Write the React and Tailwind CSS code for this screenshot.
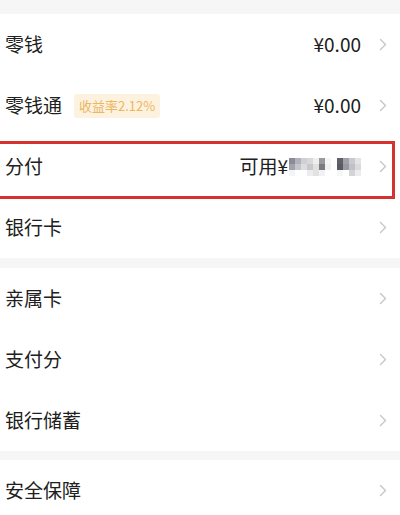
import React from 'react';

const mosaic = [
  ['bg-[#8a8a98]', 'bg-[#b2b2bc]', 'bg-[#d0d0d4]', 'bg-[#d8d8dc]', 'bg-[#eeeeee]', 'bg-[#9a9a9a]', 'bg-[#f5f5f5]', 'bg-[#ffffff]', 'bg-[#606068]', 'bg-[#a2a2aa]', 'bg-[#cacace]', 'bg-[#e4e4e4]'],
  ['bg-[#a2a2ae]', 'bg-[#c4c4cc]', 'bg-[#dddde0]', 'bg-[#c8c8cc]', 'bg-[#e0e0e0]', 'bg-[#7a7a80]', 'bg-[#f0f0f0]', 'bg-[#ffffff]', 'bg-[#5a5a64]', 'bg-[#9a9aa2]', 'bg-[#c0c0c6]', 'bg-[#dadadc]'],
  ['bg-[#f4f4f6]', 'bg-[#ffffff]', 'bg-[#ffffff]', 'bg-[#ececee]', 'bg-[#e2e2e2]', 'bg-[#f2f2f2]', 'bg-[#ffffff]', 'bg-[#ffffff]', 'bg-[#f6f6f6]', 'bg-[#ffffff]', 'bg-[#d4d4d8]', 'bg-[#ececec]'],
];

function Chevron() {
  return (
    <svg width="8" height="13" viewBox="0 0 8 13" className="ml-[18px] shrink-0">
      <path d="M1.5 1.5 L6.5 6.5 L1.5 11.5" fill="none" stroke="#c6c6c6" strokeWidth="1.4" strokeLinecap="round" strokeLinejoin="round" />
    </svg>
  );
}

function Row({ label, badge, value, children }) {
  return (
    <div className="flex items-center h-[61px] pl-[5px] pr-[13px]">
      <span className="text-[19px] text-[#202020]">{label}</span>
      {badge && (
        <span className="ml-[12px] h-[24px] px-[5px] flex items-center rounded-[3px] bg-[#fdf2df] text-[13px] text-[#ecb761]">
          {badge}
        </span>
      )}
      <div className="flex-1" />
      {value && <span className="text-[19px] text-[#202020]">{value}</span>}
      {children}
      <Chevron />
    </div>
  );
}

export default function App() {
  return (
    <div
      className="relative w-[400px] h-[515px] overflow-hidden bg-[#f6f6f6]"
      style={{ fontFamily: '"Noto Sans CJK SC", "Noto Sans", sans-serif' }}
    >
      <div className="pt-[14px]">
        <div className="bg-white">
          <Row label="零钱" value="¥0.00" />
          <Row label="零钱通" badge="收益率2.12%" value="¥0.00" />
          <Row label="分付">
            <span className="text-[19px] text-[#202020]">可用¥</span>
            <div className="grid grid-cols-[repeat(12,6px)] grid-rows-[repeat(3,6px)] ml-[1px]">
              {mosaic.flat().map((c, i) => (
                <div key={i} className={c} />
              ))}
            </div>
          </Row>
          <Row label="银行卡" />
        </div>
        <div className="bg-white mt-[10px]">
          <Row label="亲属卡" />
          <Row label="支付分" />
          <Row label="银行储蓄" />
        </div>
        <div className="bg-white mt-[9px]">
          <Row label="安全保障" />
        </div>
      </div>

      {/* highlight box */}
      <div className="absolute left-[-4px] top-[141px] w-[399px] h-[58px] border-[3px] border-[#d6302f]" />
    </div>
  );
}
